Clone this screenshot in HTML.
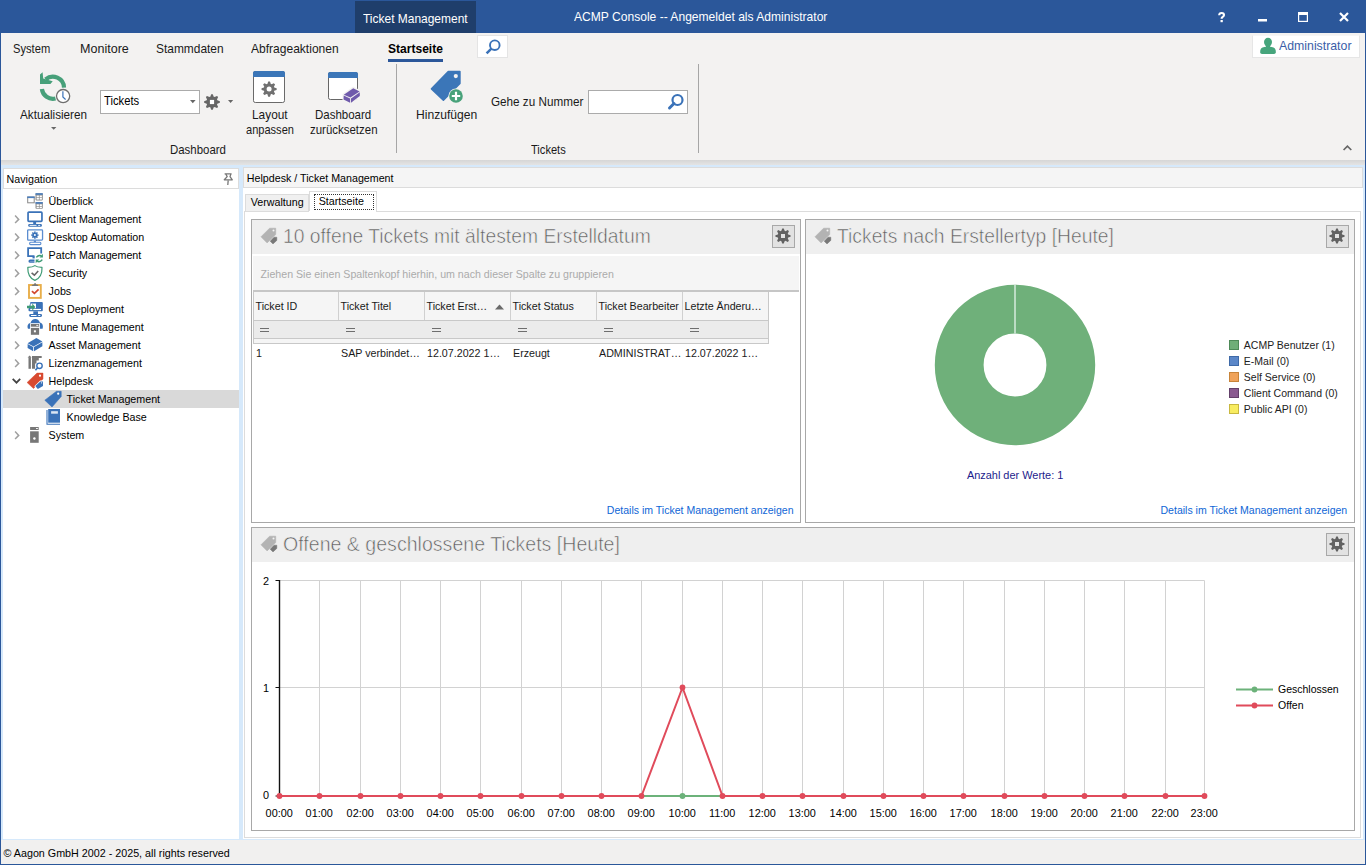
<!DOCTYPE html>
<html><head><meta charset="utf-8">
<style>
*{box-sizing:border-box;margin:0;padding:0}
html,body{width:1366px;height:865px;overflow:hidden;background:#f3f2f1;font-family:"Liberation Sans",sans-serif;color:#222;position:relative}
.a{position:absolute}
.t{position:absolute;white-space:nowrap}
svg{overflow:visible}
</style></head><body>
<div class="a" style="left:0px;top:0px;width:1366px;height:33px;background:#2b579a;"></div>
<div class="a" style="left:355px;top:1px;width:121px;height:32px;background:#1f3e6b;"></div>
<div class="t" style="left:363.40px;top:13.17px;font-size:12.209px;line-height:12.209px;color:#fff;transform:scaleX(0.9817);transform-origin:0 0;">Ticket Management</div>
<div class="t" style="left:574.30px;top:10.57px;font-size:12.209px;line-height:12.209px;color:#fff;transform:scaleX(0.9904);transform-origin:0 0;">ACMP Console -- Angemeldet als Administrator</div>
<svg class="a" style="left:1216px;top:11px" width="11" height="12"><path d="M3.2 4.3C3.2 2.8 4.2 2 5.6 2C7 2 8 2.8 8 4C8 5.1 7.2 5.6 6.5 6.1C5.8 6.6 5.6 7 5.6 7.8" fill="none" stroke="#fff" stroke-width="2.1"/><rect x="4.5" y="9" width="2.3" height="2.2" fill="#fff"/></svg>
<div class="a" style="left:1258px;top:19px;width:9px;height:2px;background:#fff;"></div>
<div class="a" style="left:1258px;top:21px;width:9px;height:0.5px;background:rgba(255,255,255,0.5);"></div>
<svg class="a" style="left:1298px;top:12px" width="10" height="10"><rect x="0.6" y="1.5" width="8.8" height="7.9" fill="none" stroke="#fff" stroke-width="1.2"/><rect x="0" y="0" width="10" height="3" fill="#fff"/></svg>
<svg class="a" style="left:1339px;top:12px" width="10" height="10"><path d="M1 1L9 9M9 1L1 9" stroke="#fff" stroke-width="2.2"/></svg>
<div class="a" style="left:0px;top:33px;width:1366px;height:127px;background:#f3f2f1;"></div>
<div class="t" style="left:13.20px;top:42.57px;font-size:12.209px;line-height:12.209px;color:#1a1a1a;transform:scaleX(0.9164);transform-origin:0 0;">System</div>
<div class="t" style="left:80.10px;top:42.57px;font-size:12.209px;line-height:12.209px;color:#1a1a1a;transform:scaleX(1.0296);transform-origin:0 0;">Monitore</div>
<div class="t" style="left:156.00px;top:42.57px;font-size:12.209px;line-height:12.209px;color:#1a1a1a;transform:scaleX(0.9782);transform-origin:0 0;">Stammdaten</div>
<div class="t" style="left:251.00px;top:42.57px;font-size:12.209px;line-height:12.209px;color:#1a1a1a;transform:scaleX(0.9875);transform-origin:0 0;">Abfrageaktionen</div>
<div class="t" style="left:388.00px;top:42.57px;font-size:12.209px;line-height:12.209px;color:#000;font-weight:bold;transform:scaleX(0.9885);transform-origin:0 0;">Startseite</div>
<div class="a" style="left:388px;top:59px;width:55px;height:3px;background:#2b579a;"></div>
<div class="a" style="left:477px;top:35px;width:31px;height:23px;background:#fff;border:1px solid #e4e4e4"></div>
<svg class="a" style="left:485px;top:39px" width="18" height="18"><circle cx="9.8" cy="6.2" r="4.8" fill="none" stroke="#3a72b8" stroke-width="1.9"/><path d="M6.4 9.6L1.6 14.4" stroke="#3a72b8" stroke-width="2.5"/></svg>
<div class="a" style="left:1252px;top:35px;width:108px;height:23px;background:#fff;border:1px solid #e6e6e6;border-top-color:#f6f6f6"></div>
<svg class="a" style="left:1259px;top:38px" width="18" height="17"><ellipse cx="9" cy="4.1" rx="4" ry="4.3" fill="#46a57c"/><path d="M7 7H11V9.5H7Z" fill="#46a57c"/><path d="M1.2 13.5C1.2 10.2 3.5 9.2 6.5 8.8L9 8.6L11.5 8.8C14.5 9.2 16.8 10.2 16.8 13.5V14.3Q16.8 15.9 15 15.9H3Q1.2 15.9 1.2 14.3Z" fill="#46a57c"/></svg>
<div class="t" style="left:1279.40px;top:39.97px;font-size:12.209px;line-height:12.209px;color:#3a5ea8;transform:scaleX(1.0096);transform-origin:0 0;">Administrator</div>
<svg class="a" style="left:36px;top:71px" width="38" height="36" viewBox="0 0 38 36"><path d="M9.6 8.4A11.1 11.1 0 0 1 28 16.6" fill="none" stroke="#47a07a" stroke-width="4.2"/>
<path d="M5.9 18A11.1 11.1 0 0 0 19.5 27.5" fill="none" stroke="#47a07a" stroke-width="4.2"/>
<path d="M4 13L4 3.6L6.6 1.2L7.2 7.6L16.7 10.3L14.4 13Z" fill="#47a07a"/>
<circle cx="27.1" cy="25.1" r="6.6" fill="#fff" stroke="#6e6e6e" stroke-width="1.3"/>
<path d="M26.9 20.2V26L29.6 28.5" fill="none" stroke="#3a72b8" stroke-width="1.2"/></svg>
<div class="t" style="left:20.30px;top:108.55px;font-size:12.346px;line-height:12.346px;color:#1a1a1a;transform:scaleX(0.9494);transform-origin:0 0;">Aktualisieren</div>
<svg class="a" style="left:51px;top:126.8px" width="6" height="3"><path d="M0 0H5.4L2.7 2.8Z" fill="#666"/></svg>
<div class="a" style="left:100px;top:90px;width:100px;height:24px;background:#fff;border:1px solid #ababab"></div>
<div class="t" style="left:103.80px;top:94.55px;font-size:12.346px;line-height:12.346px;color:#000;transform:scaleX(0.9110);transform-origin:0 0;">Tickets</div>
<svg class="a" style="left:189.5px;top:99.8px" width="6" height="4"><path d="M0 0H5.6L2.8 3.2Z" fill="#666"/></svg>
<svg class="a" style="left:203px;top:93px" width="18" height="18" viewBox="0 0 18 18"><path d="M6.86 3.83 L7.29 3.67 L8.20 1.14 L9.80 1.14 L10.71 3.67 L11.14 3.83 L11.56 4.02 L13.99 2.88 L15.12 4.01 L13.98 6.44 L14.17 6.86 L14.33 7.29 L16.86 8.20 L16.86 9.80 L14.33 10.71 L14.17 11.14 L13.98 11.56 L15.12 13.99 L13.99 15.12 L11.56 13.98 L11.14 14.17 L10.71 14.33 L9.80 16.86 L8.20 16.86 L7.29 14.33 L6.86 14.17 L6.44 13.98 L4.01 15.12 L2.88 13.99 L4.02 11.56 L3.83 11.14 L3.67 10.71 L1.14 9.80 L1.14 8.20 L3.67 7.29 L3.83 6.86 L4.02 6.44 L2.88 4.01 L4.01 2.88 L6.44 4.02Z" fill="#666"/><rect x="6.9" y="6.9" width="4.2" height="4.2" fill="#fff"/></svg>
<svg class="a" style="left:228px;top:99.9px" width="6" height="4"><path d="M0 0H5.2L2.6 3Z" fill="#666"/></svg>
<svg class="a" style="left:253px;top:71px" width="33" height="33" viewBox="0 0 33 33"><rect x="0.5" y="0.5" width="31" height="31" rx="1.8" fill="#fff" stroke="#6a6a6a"/><path d="M0 6V2Q0 0 2 0H30Q32 0 32 2V6Z" fill="#3b76b8"/><path d="M14.03 13.11 L14.39 12.98 L15.21 10.55 L16.99 10.55 L17.81 12.98 L18.17 13.11 L18.51 13.27 L20.80 12.13 L22.07 13.40 L20.93 15.69 L21.09 16.03 L21.22 16.39 L23.65 17.21 L23.65 18.99 L21.22 19.81 L21.09 20.17 L20.93 20.51 L22.07 22.80 L20.80 24.07 L18.51 22.93 L18.17 23.09 L17.81 23.22 L16.99 25.65 L15.21 25.65 L14.39 23.22 L14.03 23.09 L13.69 22.93 L11.40 24.07 L10.13 22.80 L11.27 20.51 L11.11 20.17 L10.98 19.81 L8.55 18.99 L8.55 17.21 L10.98 16.39 L11.11 16.03 L11.27 15.69 L10.13 13.40 L11.40 12.13 L13.69 13.27Z" fill="#707070"/><circle cx="16.1" cy="18.1" r="2.5" fill="#fff"/></svg>
<div class="t" style="left:251.55px;top:108.55px;font-size:12.346px;line-height:12.346px;color:#1a1a1a;transform:scaleX(0.9632);transform-origin:0 0;">Layout</div>
<div class="t" style="left:245.60px;top:123.55px;font-size:12.346px;line-height:12.346px;color:#1a1a1a;transform:scaleX(0.8966);transform-origin:0 0;">anpassen</div>
<svg class="a" style="left:327px;top:71px" width="36" height="34" viewBox="0 0 36 34"><rect x="1.5" y="1.5" width="29" height="27" rx="1.8" fill="#fff" stroke="#666" stroke-width="1"/><path d="M1 7V3Q1 1 3 1H29Q31 1 31 3V7Z" fill="#3b76b8"/>
<path d="M16.3 23.5L26.3 16.5L33.3 20.2L33.3 25.2L23.6 32.3L16.3 28.7Z" fill="#f3f2f1" stroke="#f3f2f1" stroke-width="1.6" stroke-linejoin="round"/>
<path d="M16.8 23.7L26.25 17.2L32.6 20.5L23.4 26.6Z" fill="#6f5aab"/><path d="M16.7 24.6L23.1 27.5V31.7L16.5 28.4Z" fill="#6f5aab"/><path d="M24 27.4L32.8 21.3V25.1L24 31.7Z" fill="#6f5aab"/></svg>
<div class="t" style="left:315.25px;top:108.55px;font-size:12.346px;line-height:12.346px;color:#1a1a1a;transform:scaleX(0.9322);transform-origin:0 0;">Dashboard</div>
<div class="t" style="left:310.00px;top:123.55px;font-size:12.346px;line-height:12.346px;color:#1a1a1a;transform:scaleX(0.9294);transform-origin:0 0;">zurücksetzen</div>
<div class="t" style="left:170.40px;top:143.55px;font-size:12.346px;line-height:12.346px;color:#1a1a1a;transform:scaleX(0.9273);transform-origin:0 0;">Dashboard</div>
<div class="a" style="left:396px;top:64px;width:1px;height:89px;background:#a6a6a6;"></div>
<svg class="a" style="left:430px;top:70px" width="34" height="34" viewBox="0 0 34 34"><path d="M18.3 1.5H29.9V13.4L13.4 30.2L1.5 18.8Z" fill="#3b76b8" stroke="#3b76b8" stroke-width="1.6" stroke-linejoin="round"/><circle cx="25.8" cy="6.1" r="2.1" fill="#f3f2f1"/><circle cx="26" cy="26" r="7.6" fill="#f3f2f1"/><circle cx="26" cy="26" r="6.8" fill="#48a27a"/><path d="M26 21.8V30.2M21.8 26H30.2" stroke="#fff" stroke-width="2.2"/></svg>
<div class="t" style="left:416.30px;top:108.55px;font-size:12.346px;line-height:12.346px;color:#1a1a1a;transform:scaleX(0.9815);transform-origin:0 0;">Hinzufügen</div>
<div class="t" style="left:490.70px;top:95.55px;font-size:12.346px;line-height:12.346px;color:#1a1a1a;transform:scaleX(0.9485);transform-origin:0 0;">Gehe zu Nummer</div>
<div class="a" style="left:588px;top:90px;width:100px;height:24px;background:#fff;border:1px solid #ababab"></div>
<svg class="a" style="left:667px;top:93px" width="18" height="18"><circle cx="10.5" cy="7" r="5" fill="none" stroke="#3a72b8" stroke-width="2.2"/><path d="M7 10.5L2.5 15" stroke="#3a72b8" stroke-width="3" stroke-linecap="round"/></svg>
<div class="t" style="left:530.90px;top:143.55px;font-size:12.346px;line-height:12.346px;color:#1a1a1a;transform:scaleX(0.9006);transform-origin:0 0;">Tickets</div>
<div class="a" style="left:698px;top:64px;width:1px;height:89px;background:#a6a6a6;"></div>
<svg class="a" style="left:1342px;top:143px" width="11" height="8"><path d="M1.6 7L5.4 3.2L9.3 7" fill="none" stroke="#666" stroke-width="1.7"/></svg>
<div class="a" style="left:1px;top:160px;width:1364px;height:5px;background:linear-gradient(#d6d6d6,#e4e4e4);"></div>
<div class="a" style="left:1px;top:165px;width:1364px;height:675px;background:#d6e9fb;"></div>
<div class="a" style="left:3px;top:168px;width:236px;height:671px;background:#fff;"></div>
<div class="a" style="left:3px;top:168px;width:236px;height:21px;background:#fff;border:1px solid #dcdcdc"></div>
<div class="t" style="left:6.60px;top:173.94px;font-size:10.700px;line-height:10.700px;color:#000;">Navigation</div>
<svg class="a" style="left:222px;top:172px" width="12" height="14"><path d="M2.6 1.8H9.6M3.6 1.8L5.2 4.6L2.3 7.8H10.3L8 4.6L9 1.8" stroke="#777" stroke-width="1.3" fill="none" stroke-linejoin="round"/><path d="M6.2 8.4L5.8 13" stroke="#777" stroke-width="1.3"/></svg>
<div class="a" style="left:3px;top:390px;width:236px;height:18px;background:#d9d9d9;"></div>
<svg class="a" style="left:27px;top:193px" width="17" height="17" viewBox="0 0 17 17"><rect x="0.7" y="4" width="6.5" height="5.8" fill="#fff" stroke="#888"/><rect x="0.2" y="3.5" width="7.5" height="1.6" fill="#4a7fc0"/><rect x="8.5" y="0.2" width="7.3" height="7.2" rx="0.8" fill="#8a8a8a"/><rect x="8.5" y="0.2" width="7.3" height="1.6" fill="#4a7fc0"/><rect x="9.6" y="2.5" width="2.3" height="1.9" fill="#fff"/><rect x="12.6" y="2.5" width="2.3" height="1.9" fill="#fff"/><rect x="9.6" y="5" width="2.3" height="1.6" fill="#fff"/><rect x="12.6" y="5" width="2.3" height="1.6" fill="#fff"/><rect x="8.5" y="9.1" width="7.3" height="6.7" rx="0.8" fill="#8a8a8a"/><rect x="8.5" y="9.1" width="7.3" height="1.6" fill="#4a7fc0"/><rect x="9.6" y="11.3" width="2.3" height="1.9" fill="#fff"/><rect x="12.6" y="11.3" width="2.3" height="1.9" fill="#fff"/><rect x="9.6" y="13.8" width="2.3" height="1.3" fill="#fff"/><rect x="12.6" y="13.8" width="2.3" height="1.3" fill="#fff"/></svg>
<div class="t" style="left:48.60px;top:195.54px;font-size:10.700px;line-height:10.700px;color:#000;">Überblick</div>
<svg class="a" style="left:13px;top:214px" width="8" height="11"><path d="M2.1 1.6L5.7 5.4L2.1 9" fill="none" stroke="#a0a0a0" stroke-width="1.5"/></svg>
<svg class="a" style="left:27px;top:211px" width="17" height="17" viewBox="0 0 17 17"><rect x="1.05" y="1.1" width="13.9" height="9.2" rx="0.8" fill="none" stroke="#3a72b8" stroke-width="1.7"/><rect x="6.2" y="11" width="2.9" height="2" fill="#3a72b8"/><rect x="1.2" y="13" width="13.7" height="2.7" rx="1.2" fill="#3a72b8"/><rect x="2.6" y="13.9" width="6.9" height="0.9" fill="#fff"/><rect x="11.2" y="13.9" width="2" height="0.9" fill="#fff"/></svg>
<div class="t" style="left:48.60px;top:213.54px;font-size:10.700px;line-height:10.700px;color:#000;">Client Management</div>
<svg class="a" style="left:13px;top:232px" width="8" height="11"><path d="M2.1 1.6L5.7 5.4L2.1 9" fill="none" stroke="#a0a0a0" stroke-width="1.5"/></svg>
<svg class="a" style="left:27px;top:229px" width="17" height="17" viewBox="0 0 17 17"><rect x="0.65" y="0.85" width="14.9" height="10.3" rx="0.8" fill="none" stroke="#5b8dd0" stroke-width="1.3"/><g transform="translate(7.9 6.1)" fill="#3a72b8"><circle r="2.4"/><rect x="-0.8" y="-3.6" width="1.6" height="7.2"/><rect x="-0.8" y="-3.6" width="1.6" height="7.2" transform="rotate(45)"/><rect x="-0.8" y="-3.6" width="1.6" height="7.2" transform="rotate(90)"/><rect x="-0.8" y="-3.6" width="1.6" height="7.2" transform="rotate(135)"/></g><circle cx="7.9" cy="6.1" r="1" fill="#fff"/><rect x="6.8" y="11.5" width="2.2" height="1.6" fill="#5b8dd0"/><rect x="2.6" y="13.3" width="11.3" height="2.3" rx="1" fill="none" stroke="#5b8dd0" stroke-width="1.1"/></svg>
<div class="t" style="left:48.60px;top:231.54px;font-size:10.700px;line-height:10.700px;color:#000;">Desktop Automation</div>
<svg class="a" style="left:13px;top:250px" width="8" height="11"><path d="M2.1 1.6L5.7 5.4L2.1 9" fill="none" stroke="#a0a0a0" stroke-width="1.5"/></svg>
<svg class="a" style="left:27px;top:247px" width="17" height="17" viewBox="0 0 17 17"><path d="M7.5 9.2H1.1V1.2H14.2V6.5" fill="none" stroke="#3a72b8" stroke-width="1.8"/><rect x="5.5" y="9.4" width="2.2" height="2" fill="#3a72b8"/><path d="M7.5 13.3H3.2Q2.2 13.3 2.2 14.2Q2.2 15.1 3.2 15.1H7.5" fill="none" stroke="#3a72b8" stroke-width="1.5"/><path d="M9.3 10.4Q11.5 7.5 14.5 8.8" fill="none" stroke="#3d9a74" stroke-width="1.5"/><path d="M15.9 6.8V10.4H12.5Z" fill="#3d9a74"/><path d="M15.3 12.6Q13.2 15.6 10.2 14.3" fill="none" stroke="#3d9a74" stroke-width="1.5"/><path d="M8.7 16.2V12.5H12.2Z" fill="#3d9a74"/></svg>
<div class="t" style="left:48.60px;top:249.54px;font-size:10.700px;line-height:10.700px;color:#000;">Patch Management</div>
<svg class="a" style="left:13px;top:268px" width="8" height="11"><path d="M2.1 1.6L5.7 5.4L2.1 9" fill="none" stroke="#a0a0a0" stroke-width="1.5"/></svg>
<svg class="a" style="left:27px;top:265px" width="17" height="17" viewBox="0 0 17 17"><path d="M7.9 0.6C9.3 1.7 11.5 2.3 15 2.4C15.3 9 12.5 13.5 7.9 15.4C3.3 13.5 0.6 9 0.8 2.4C4.3 2.3 6.5 1.7 7.9 0.6Z" fill="none" stroke="#3d9a74" stroke-width="1.2" stroke-linejoin="round"/><path d="M4.6 7.8L7.4 10.2L11.2 6" fill="none" stroke="#666" stroke-width="1.6"/></svg>
<div class="t" style="left:48.60px;top:267.54px;font-size:10.700px;line-height:10.700px;color:#000;">Security</div>
<svg class="a" style="left:13px;top:286px" width="8" height="11"><path d="M2.1 1.6L5.7 5.4L2.1 9" fill="none" stroke="#a0a0a0" stroke-width="1.5"/></svg>
<svg class="a" style="left:27px;top:283px" width="17" height="17" viewBox="0 0 17 17"><rect x="2" y="2" width="11.8" height="12.9" fill="#fff" stroke="#e8ae4a" stroke-width="1.9"/><path d="M4.6 2.9H11.6L10.5 1.4H9.3L8.8 0.3H7.4L6.9 1.4H5.7Z" fill="#777"/><path d="M4.9 8.1L7.45 10.4L11.6 6.4" fill="none" stroke="#d2482f" stroke-width="1.7"/></svg>
<div class="t" style="left:48.60px;top:285.54px;font-size:10.700px;line-height:10.700px;color:#000;">Jobs</div>
<svg class="a" style="left:13px;top:304px" width="8" height="11"><path d="M2.1 1.6L5.7 5.4L2.1 9" fill="none" stroke="#a0a0a0" stroke-width="1.5"/></svg>
<svg class="a" style="left:27px;top:301px" width="17" height="17" viewBox="0 0 17 17"><path d="M3.5 1H14.8Q15.8 1 15.8 2V9.3Q15.8 10.3 14.8 10.3H2.5Q1.5 10.3 1.5 9.3V8" fill="#3a72b8"/><rect x="3.2" y="7.9" width="10.8" height="1.2" fill="#fff"/><rect x="3.6" y="2.6" width="5.4" height="4.6" fill="#fff"/><rect x="6.3" y="10.3" width="4.7" height="2.8" fill="#3a72b8"/><rect x="2.2" y="13" width="12.8" height="2.9" rx="1.3" fill="#3a72b8"/><rect x="4" y="14" width="5.5" height="1" fill="#fff"/><rect x="11.3" y="14" width="2" height="1" fill="#fff"/><path d="M0 5.6H5.3V3.2L8.3 6.9L5.3 10.5V8.1H0Z" fill="#3d9a74" transform="translate(0 -0.8)"/></svg>
<div class="t" style="left:48.60px;top:303.54px;font-size:10.700px;line-height:10.700px;color:#000;">OS Deployment</div>
<svg class="a" style="left:13px;top:322px" width="8" height="11"><path d="M2.1 1.6L5.7 5.4L2.1 9" fill="none" stroke="#a0a0a0" stroke-width="1.5"/></svg>
<svg class="a" style="left:27px;top:319px" width="17" height="17" viewBox="0 0 17 17"><path d="M1 9.8C-0.2 7.2 1 4.2 3.5 4C4.2 1.5 6 0 8.3 0C10.6 0 12.4 1.5 12.8 3.6C15.3 3.8 16.6 6.8 15.6 9.8Z" fill="#3a72b8"/><rect x="3.1" y="4.2" width="9.8" height="12.4" fill="#fff"/><rect x="3.9" y="5" width="8.2" height="2.7" fill="#777"/><rect x="9.3" y="5.9" width="2" height="0.9" fill="#fff"/><rect x="3.9" y="8.9" width="8.2" height="6.9" fill="#777"/><rect x="6.9" y="11.3" width="2" height="2" fill="#fff"/></svg>
<div class="t" style="left:48.60px;top:321.54px;font-size:10.700px;line-height:10.700px;color:#000;">Intune Management</div>
<svg class="a" style="left:13px;top:340px" width="8" height="11"><path d="M2.1 1.6L5.7 5.4L2.1 9" fill="none" stroke="#a0a0a0" stroke-width="1.5"/></svg>
<svg class="a" style="left:27px;top:337px" width="17" height="17" viewBox="0 0 17 17"><path d="M0.6 6.2L9.4 1.1L15.4 4.4L6.6 9.5Z" fill="#3a72b8"/><path d="M0.6 6.9L6.2 10.1V14.2L0.6 11Z" fill="#3a72b8"/><path d="M7 10.1L15.4 5.2V9.2L7 14.2Z" fill="#3a72b8"/></svg>
<div class="t" style="left:48.60px;top:339.54px;font-size:10.700px;line-height:10.700px;color:#000;">Asset Management</div>
<svg class="a" style="left:13px;top:358px" width="8" height="11"><path d="M2.1 1.6L5.7 5.4L2.1 9" fill="none" stroke="#a0a0a0" stroke-width="1.5"/></svg>
<svg class="a" style="left:27px;top:355px" width="17" height="17" viewBox="0 0 17 17"><rect x="1.5" y="2.2" width="2.4" height="11.6" fill="#777"/><path d="M0.6 2.5L2.7 0.4L4.5 2.5Z" fill="#777"/><path d="M5 1H14.7V2.9H11.8V5.6H9.5V8.5H8.1V13.8H5Z" fill="#777"/><circle cx="12.5" cy="10.8" r="2.7" fill="#fff" stroke="#3a72b8" stroke-width="1.4"/><path d="M10.6 12.8L8.4 15.3" stroke="#3a72b8" stroke-width="1.6"/></svg>
<div class="t" style="left:48.60px;top:357.54px;font-size:10.700px;line-height:10.700px;color:#000;">Lizenzmanagement</div>
<svg class="a" style="left:11px;top:378px" width="11" height="8"><path d="M1.7 0.8L5.5 4.6L9.2 0.8" fill="none" stroke="#444" stroke-width="1.8"/></svg>
<svg class="a" style="left:27px;top:373px" width="17" height="17" viewBox="0 0 17 17"><path d="M10 0.1H16V6.1L6.5 15.5L0.1 9.5Z" fill="#d84a30" stroke="#d84a30" stroke-width="0.5" stroke-linejoin="round"/><circle cx="13" cy="2.7" r="1.1" fill="#fff"/><path d="M13.2 7.6H16.7V13.2L10.8 17L7.3 13.2Z" fill="#fff"/><path d="M13.4 8.5H16V13L10.8 16L8.3 13Z" fill="#3a72b8"/><circle cx="14.6" cy="9.8" r="0.6" fill="#fff"/></svg>
<div class="t" style="left:48.60px;top:375.54px;font-size:10.700px;line-height:10.700px;color:#000;">Helpdesk</div>
<svg class="a" style="left:45px;top:391px" width="17" height="17" viewBox="0 0 17 17"><path d="M11.5 0.3H16.2V5.5L7 16L-0.2 9.2Z" fill="#3a72b8" stroke="#3a72b8" stroke-width="0.6" stroke-linejoin="round"/><circle cx="13.2" cy="2.7" r="1.1" fill="#fff"/></svg>
<div class="t" style="left:66.60px;top:393.54px;font-size:10.700px;line-height:10.700px;color:#000;">Ticket Management</div>
<svg class="a" style="left:45px;top:409px" width="17" height="17" viewBox="0 0 17 17"><rect x="3.2" y="0" width="11.8" height="13.7" fill="#3a72b8"/><rect x="6.1" y="2.2" width="6.8" height="2.5" fill="#dbe6f3"/><path d="M2 0.9V15.3H15" fill="none" stroke="#3a72b8" stroke-width="1.1"/></svg>
<div class="t" style="left:66.60px;top:411.54px;font-size:10.700px;line-height:10.700px;color:#000;">Knowledge Base</div>
<svg class="a" style="left:13px;top:430px" width="8" height="11"><path d="M2.1 1.6L5.7 5.4L2.1 9" fill="none" stroke="#a0a0a0" stroke-width="1.5"/></svg>
<svg class="a" style="left:27px;top:427px" width="17" height="17" viewBox="0 0 17 17"><rect x="3.1" y="0" width="8.6" height="3" fill="#777"/><rect x="9.1" y="1" width="1.7" height="1" fill="#fff"/><rect x="3.1" y="4.3" width="8.6" height="11.5" fill="#777"/><circle cx="7.4" cy="11.5" r="1.2" fill="#fff"/></svg>
<div class="t" style="left:48.60px;top:429.54px;font-size:10.700px;line-height:10.700px;color:#000;">System</div>
<div class="a" style="left:243px;top:167px;width:1120px;height:672px;background:#fff;"></div>
<div class="a" style="left:243px;top:167px;width:1120px;height:21px;background:#f5f5f5;border:1px solid #dcdcdc"></div>
<div class="t" style="left:246.80px;top:172.74px;font-size:10.700px;line-height:10.700px;color:#000;">Helpdesk / Ticket Management</div>
<div class="a" style="left:245px;top:194px;width:64px;height:18px;background:#f0f0f0;border:1px solid #dcdcdc;border-bottom:none"></div>
<div class="t" style="left:250.80px;top:197.34px;font-size:10.700px;line-height:10.700px;color:#000;">Verwaltung</div>
<div class="a" style="left:309px;top:191px;width:68px;height:21px;background:#fff;border:1px solid #dcdcdc;border-bottom:none"></div>
<div class="a" style="left:314px;top:194px;width:60px;height:16px;border:1px dotted #333"></div>
<div class="t" style="left:318.70px;top:195.54px;font-size:10.700px;line-height:10.700px;color:#000;">Startseite</div>
<div class="a" style="left:244px;top:211px;width:1117px;height:627px;background:#fff;border:1px solid #dcdcdc"></div>
<div class="a" style="left:309px;top:211px;width:67px;height:1px;background:#fff"></div>
<div class="a" style="left:251px;top:219px;width:550px;height:304px;background:#fff;border:1px solid #a8a8a8"></div>
<div class="a" style="left:252px;top:220px;width:548px;height:34px;background:#efefef;"></div>
<svg class="a" style="left:261px;top:227px" width="17" height="17" viewBox="0 0 17 17"><path d="M8.6 1.2H14.7V7.6L6.1 15.9L0 9.8Z" fill="#b3b3b3" stroke="#b3b3b3" stroke-width="0.6" stroke-linejoin="round"/><circle cx="12.5" cy="3.5" r="1" fill="#f4f4f4"/><path d="M13 10.2H15.8V13.4L12 16.9L9.2 14.2Z" fill="#787878" stroke="#787878" stroke-width="0.5" stroke-linejoin="round"/></svg>
<div class="t" style="left:282.60px;top:226.47px;font-size:20.713px;line-height:20.713px;color:#5c5c5c;transform:scaleX(0.9326);transform-origin:0 0;-webkit-text-stroke:0.6px #efefef;">10 offene Tickets mit ältestem Erstelldatum</div>
<div class="a" style="left:772px;top:225px;width:23px;height:23px;background:#e2e2e2;border:1px solid #a8a8a8"></div>
<svg class="a" style="left:775px;top:228px" width="16" height="16" viewBox="0 0 16 16"><path d="M5.93 3.01 L6.38 2.85 L7.20 0.44 L8.80 0.44 L9.62 2.85 L10.07 3.01 L10.50 3.21 L12.78 2.09 L13.91 3.22 L12.79 5.50 L12.99 5.93 L13.15 6.38 L15.56 7.20 L15.56 8.80 L13.15 9.62 L12.99 10.07 L12.79 10.50 L13.91 12.78 L12.78 13.91 L10.50 12.79 L10.07 12.99 L9.62 13.15 L8.80 15.56 L7.20 15.56 L6.38 13.15 L5.93 12.99 L5.50 12.79 L3.22 13.91 L2.09 12.78 L3.21 10.50 L3.01 10.07 L2.85 9.62 L0.44 8.80 L0.44 7.20 L2.85 6.38 L3.01 5.93 L3.21 5.50 L2.09 3.22 L3.22 2.09 L5.50 3.21Z" fill="#626262"/><rect x="6" y="6" width="4" height="4" fill="#e2e2e2"/></svg>
<div class="a" style="left:253px;top:256px;width:546px;height:34px;background:#f5f5f5;"></div>
<div class="t" style="left:260.60px;top:268.90px;font-size:10.631px;line-height:10.631px;color:#ababab;">Ziehen Sie einen Spaltenkopf hierhin, um nach dieser Spalte zu gruppieren</div>
<div class="a" style="left:253px;top:290px;width:546px;height:2px;background:#c6c6c6;"></div>
<div class="a" style="left:253px;top:292px;width:516px;height:52px;background:#f5f5f5;border-left:1px solid #c8c8c8;border-right:1px solid #c8c8c8"></div>
<div class="a" style="left:253px;top:320px;width:516px;height:1px;background:#c8c8c8;"></div>
<div class="a" style="left:254px;top:321px;width:514px;height:17px;background:#ebebeb;"></div>
<div class="a" style="left:253px;top:338px;width:516px;height:1px;background:#c8c8c8;"></div>
<div class="a" style="left:253px;top:343px;width:516px;height:1px;background:#c8c8c8;"></div>
<div class="t" style="left:255.50px;top:300.74px;font-size:10.700px;line-height:10.700px;color:#1a1a1a;">Ticket ID</div>
<div class="a" style="left:260px;top:328px;width:9px;height:1px;background:#6e6e6e;"></div>
<div class="a" style="left:260px;top:331px;width:9px;height:1px;background:#6e6e6e;"></div>
<div class="t" style="left:256.00px;top:347.54px;font-size:10.700px;line-height:10.700px;color:#1a1a1a;">1</div>
<div class="a" style="left:338px;top:292px;width:1px;height:28px;background:#d0d0d0;"></div>
<div class="t" style="left:340.50px;top:300.74px;font-size:10.700px;line-height:10.700px;color:#1a1a1a;">Ticket Titel</div>
<div class="a" style="left:346px;top:328px;width:9px;height:1px;background:#6e6e6e;"></div>
<div class="a" style="left:346px;top:331px;width:9px;height:1px;background:#6e6e6e;"></div>
<div class="t" style="left:341.00px;top:347.54px;font-size:10.700px;line-height:10.700px;color:#1a1a1a;">SAP verbindet…</div>
<div class="a" style="left:424px;top:292px;width:1px;height:28px;background:#d0d0d0;"></div>
<div class="t" style="left:426.50px;top:300.74px;font-size:10.700px;line-height:10.700px;color:#1a1a1a;">Ticket Erst…</div>
<div class="a" style="left:432px;top:328px;width:9px;height:1px;background:#6e6e6e;"></div>
<div class="a" style="left:432px;top:331px;width:9px;height:1px;background:#6e6e6e;"></div>
<div class="t" style="left:427.00px;top:347.54px;font-size:10.700px;line-height:10.700px;color:#1a1a1a;">12.07.2022 1…</div>
<div class="a" style="left:510px;top:292px;width:1px;height:28px;background:#d0d0d0;"></div>
<div class="t" style="left:512.50px;top:300.74px;font-size:10.700px;line-height:10.700px;color:#1a1a1a;">Ticket Status</div>
<div class="a" style="left:518px;top:328px;width:9px;height:1px;background:#6e6e6e;"></div>
<div class="a" style="left:518px;top:331px;width:9px;height:1px;background:#6e6e6e;"></div>
<div class="t" style="left:513.00px;top:347.54px;font-size:10.700px;line-height:10.700px;color:#1a1a1a;">Erzeugt</div>
<div class="a" style="left:596px;top:292px;width:1px;height:28px;background:#d0d0d0;"></div>
<div class="t" style="left:598.50px;top:300.74px;font-size:10.700px;line-height:10.700px;color:#1a1a1a;">Ticket Bearbeiter</div>
<div class="a" style="left:604px;top:328px;width:9px;height:1px;background:#6e6e6e;"></div>
<div class="a" style="left:604px;top:331px;width:9px;height:1px;background:#6e6e6e;"></div>
<div class="t" style="left:599.00px;top:347.54px;font-size:10.700px;line-height:10.700px;color:#1a1a1a;">ADMINISTRAT…</div>
<div class="a" style="left:682px;top:292px;width:1px;height:28px;background:#d0d0d0;"></div>
<div class="t" style="left:684.50px;top:300.74px;font-size:10.700px;line-height:10.700px;color:#1a1a1a;">Letzte Änderu…</div>
<div class="a" style="left:690px;top:328px;width:9px;height:1px;background:#6e6e6e;"></div>
<div class="a" style="left:690px;top:331px;width:9px;height:1px;background:#6e6e6e;"></div>
<div class="t" style="left:685.00px;top:347.54px;font-size:10.700px;line-height:10.700px;color:#1a1a1a;">12.07.2022 1…</div>
<svg class="a" style="left:495px;top:304px" width="9" height="6"><path d="M0 5.5H9L4.5 0.5Z" fill="#6a6a6a"/></svg>
<div class="t" style="left:606.80px;top:504.58px;font-size:10.542px;line-height:10.542px;color:#0f66d6;">Details im Ticket Management anzeigen</div>
<div class="a" style="left:805px;top:219px;width:550px;height:304px;background:#fff;border:1px solid #a8a8a8"></div>
<div class="a" style="left:806px;top:220px;width:548px;height:34px;background:#efefef;"></div>
<svg class="a" style="left:815px;top:227px" width="17" height="17" viewBox="0 0 17 17"><path d="M8.6 1.2H14.7V7.6L6.1 15.9L0 9.8Z" fill="#b3b3b3" stroke="#b3b3b3" stroke-width="0.6" stroke-linejoin="round"/><circle cx="12.5" cy="3.5" r="1" fill="#f4f4f4"/><path d="M13 10.2H15.8V13.4L12 16.9L9.2 14.2Z" fill="#787878" stroke="#787878" stroke-width="0.5" stroke-linejoin="round"/></svg>
<div class="t" style="left:836.60px;top:226.47px;font-size:20.713px;line-height:20.713px;color:#5c5c5c;transform:scaleX(0.9315);transform-origin:0 0;-webkit-text-stroke:0.6px #efefef;">Tickets nach Erstellertyp [Heute]</div>
<div class="a" style="left:1326px;top:225px;width:23px;height:23px;background:#e2e2e2;border:1px solid #a8a8a8"></div>
<svg class="a" style="left:1329px;top:228px" width="16" height="16" viewBox="0 0 16 16"><path d="M5.93 3.01 L6.38 2.85 L7.20 0.44 L8.80 0.44 L9.62 2.85 L10.07 3.01 L10.50 3.21 L12.78 2.09 L13.91 3.22 L12.79 5.50 L12.99 5.93 L13.15 6.38 L15.56 7.20 L15.56 8.80 L13.15 9.62 L12.99 10.07 L12.79 10.50 L13.91 12.78 L12.78 13.91 L10.50 12.79 L10.07 12.99 L9.62 13.15 L8.80 15.56 L7.20 15.56 L6.38 13.15 L5.93 12.99 L5.50 12.79 L3.22 13.91 L2.09 12.78 L3.21 10.50 L3.01 10.07 L2.85 9.62 L0.44 8.80 L0.44 7.20 L2.85 6.38 L3.01 5.93 L3.21 5.50 L2.09 3.22 L3.22 2.09 L5.50 3.21Z" fill="#626262"/><rect x="6" y="6" width="4" height="4" fill="#e2e2e2"/></svg>
<svg class="a" style="left:930px;top:280px" width="170" height="170"><circle cx="85" cy="85" r="55.8" fill="none" stroke="#6fb07a" stroke-width="48.8"/><rect x="84" y="5" width="2" height="49" fill="#bcdcc4"/></svg>
<div class="a" style="left:1229px;top:340px;width:10px;height:10px;background:#6fae78;border:1px solid #4e8a58"></div>
<div class="t" style="left:1243.80px;top:339.91px;font-size:10.500px;line-height:10.500px;color:#222;">ACMP Benutzer (1)</div>
<div class="a" style="left:1229px;top:356px;width:10px;height:10px;background:#5b87c8;border:1px solid #3f6aa8"></div>
<div class="t" style="left:1243.80px;top:355.91px;font-size:10.500px;line-height:10.500px;color:#222;">E-Mail (0)</div>
<div class="a" style="left:1229px;top:372px;width:10px;height:10px;background:#f0a35a;border:1px solid #c8843a"></div>
<div class="t" style="left:1243.80px;top:371.91px;font-size:10.500px;line-height:10.500px;color:#222;">Self Service (0)</div>
<div class="a" style="left:1229px;top:388px;width:10px;height:10px;background:#8a5a90;border:1px solid #64406a"></div>
<div class="t" style="left:1243.80px;top:387.91px;font-size:10.500px;line-height:10.500px;color:#222;">Client Command (0)</div>
<div class="a" style="left:1229px;top:404px;width:10px;height:10px;background:#f8ec60;border:1px solid #c8b840"></div>
<div class="t" style="left:1243.80px;top:403.91px;font-size:10.500px;line-height:10.500px;color:#222;">Public API (0)</div>
<div class="t" style="left:966.90px;top:469.53px;font-size:10.954px;line-height:10.954px;color:#1c1c8c;">Anzahl der Werte: 1</div>
<div class="t" style="left:1160.50px;top:504.58px;font-size:10.542px;line-height:10.542px;color:#0f66d6;">Details im Ticket Management anzeigen</div>
<div class="a" style="left:251px;top:527px;width:1104px;height:304px;background:#fff;border:1px solid #a8a8a8"></div>
<div class="a" style="left:252px;top:528px;width:1102px;height:34px;background:#efefef;"></div>
<svg class="a" style="left:261px;top:535px" width="17" height="17" viewBox="0 0 17 17"><path d="M8.6 1.2H14.7V7.6L6.1 15.9L0 9.8Z" fill="#b3b3b3" stroke="#b3b3b3" stroke-width="0.6" stroke-linejoin="round"/><circle cx="12.5" cy="3.5" r="1" fill="#f4f4f4"/><path d="M13 10.2H15.8V13.4L12 16.9L9.2 14.2Z" fill="#787878" stroke="#787878" stroke-width="0.5" stroke-linejoin="round"/></svg>
<div class="t" style="left:282.60px;top:534.47px;font-size:20.713px;line-height:20.713px;color:#5c5c5c;transform:scaleX(0.9455);transform-origin:0 0;-webkit-text-stroke:0.6px #efefef;">Offene & geschlossene Tickets [Heute]</div>
<div class="a" style="left:1326px;top:533px;width:23px;height:23px;background:#e2e2e2;border:1px solid #a8a8a8"></div>
<svg class="a" style="left:1329px;top:536px" width="16" height="16" viewBox="0 0 16 16"><path d="M5.93 3.01 L6.38 2.85 L7.20 0.44 L8.80 0.44 L9.62 2.85 L10.07 3.01 L10.50 3.21 L12.78 2.09 L13.91 3.22 L12.79 5.50 L12.99 5.93 L13.15 6.38 L15.56 7.20 L15.56 8.80 L13.15 9.62 L12.99 10.07 L12.79 10.50 L13.91 12.78 L12.78 13.91 L10.50 12.79 L10.07 12.99 L9.62 13.15 L8.80 15.56 L7.20 15.56 L6.38 13.15 L5.93 12.99 L5.50 12.79 L3.22 13.91 L2.09 12.78 L3.21 10.50 L3.01 10.07 L2.85 9.62 L0.44 8.80 L0.44 7.20 L2.85 6.38 L3.01 5.93 L3.21 5.50 L2.09 3.22 L3.22 2.09 L5.50 3.21Z" fill="#626262"/><rect x="6" y="6" width="4" height="4" fill="#e2e2e2"/></svg>
<svg class="a" style="left:252px;top:562px" width="1102" height="268"><line x1="67.5" y1="18.5" x2="67.5" y2="234" stroke="#d2d2d2" stroke-width="1"/><line x1="108.5" y1="18.5" x2="108.5" y2="234" stroke="#d2d2d2" stroke-width="1"/><line x1="148.5" y1="18.5" x2="148.5" y2="234" stroke="#d2d2d2" stroke-width="1"/><line x1="188.5" y1="18.5" x2="188.5" y2="234" stroke="#d2d2d2" stroke-width="1"/><line x1="228.5" y1="18.5" x2="228.5" y2="234" stroke="#d2d2d2" stroke-width="1"/><line x1="269.5" y1="18.5" x2="269.5" y2="234" stroke="#d2d2d2" stroke-width="1"/><line x1="309.5" y1="18.5" x2="309.5" y2="234" stroke="#d2d2d2" stroke-width="1"/><line x1="349.5" y1="18.5" x2="349.5" y2="234" stroke="#d2d2d2" stroke-width="1"/><line x1="389.5" y1="18.5" x2="389.5" y2="234" stroke="#d2d2d2" stroke-width="1"/><line x1="430.5" y1="18.5" x2="430.5" y2="234" stroke="#d2d2d2" stroke-width="1"/><line x1="470.5" y1="18.5" x2="470.5" y2="234" stroke="#d2d2d2" stroke-width="1"/><line x1="510.5" y1="18.5" x2="510.5" y2="234" stroke="#d2d2d2" stroke-width="1"/><line x1="550.5" y1="18.5" x2="550.5" y2="234" stroke="#d2d2d2" stroke-width="1"/><line x1="591.5" y1="18.5" x2="591.5" y2="234" stroke="#d2d2d2" stroke-width="1"/><line x1="631.5" y1="18.5" x2="631.5" y2="234" stroke="#d2d2d2" stroke-width="1"/><line x1="671.5" y1="18.5" x2="671.5" y2="234" stroke="#d2d2d2" stroke-width="1"/><line x1="711.5" y1="18.5" x2="711.5" y2="234" stroke="#d2d2d2" stroke-width="1"/><line x1="752.5" y1="18.5" x2="752.5" y2="234" stroke="#d2d2d2" stroke-width="1"/><line x1="792.5" y1="18.5" x2="792.5" y2="234" stroke="#d2d2d2" stroke-width="1"/><line x1="832.5" y1="18.5" x2="832.5" y2="234" stroke="#d2d2d2" stroke-width="1"/><line x1="872.5" y1="18.5" x2="872.5" y2="234" stroke="#d2d2d2" stroke-width="1"/><line x1="913.5" y1="18.5" x2="913.5" y2="234" stroke="#d2d2d2" stroke-width="1"/><line x1="952.5" y1="18.5" x2="952.5" y2="234" stroke="#d2d2d2" stroke-width="1"/><line x1="27.5" y1="125.5" x2="952.5" y2="125.5" stroke="#d2d2d2" stroke-width="1"/><line x1="27.5" y1="18.5" x2="952.5" y2="18.5" stroke="#d2d2d2" stroke-width="1"/><line x1="27.5" y1="18.0" x2="27.5" y2="234" stroke="#111" stroke-width="1.4"/><line x1="23.5" y1="125.5" x2="27.5" y2="125.5" stroke="#111" stroke-width="1"/><line x1="23.5" y1="18.5" x2="27.5" y2="18.5" stroke="#111" stroke-width="1"/><line x1="23.5" y1="234" x2="27.5" y2="234" stroke="#111" stroke-width="1"/><polyline points="389.5,234 470.5,234" fill="none" stroke="#6cb27a" stroke-width="2"/><polyline points="27.5,234 389.5,234" fill="none" stroke="#e04b5b" stroke-width="2"/><polyline points="389.5,234 430.5,125.5 470.5,234 952.5,234" fill="none" stroke="#e04b5b" stroke-width="2" stroke-linejoin="round"/><circle cx="430.5" cy="234" r="2.9" fill="#6cb27a"/><circle cx="27.5" cy="234" r="2.9" fill="#e04b5b"/><circle cx="67.5" cy="234" r="2.9" fill="#e04b5b"/><circle cx="108.5" cy="234" r="2.9" fill="#e04b5b"/><circle cx="148.5" cy="234" r="2.9" fill="#e04b5b"/><circle cx="188.5" cy="234" r="2.9" fill="#e04b5b"/><circle cx="228.5" cy="234" r="2.9" fill="#e04b5b"/><circle cx="269.5" cy="234" r="2.9" fill="#e04b5b"/><circle cx="309.5" cy="234" r="2.9" fill="#e04b5b"/><circle cx="349.5" cy="234" r="2.9" fill="#e04b5b"/><circle cx="389.5" cy="234" r="2.9" fill="#e04b5b"/><circle cx="430.5" cy="125.5" r="2.9" fill="#e04b5b"/><circle cx="470.5" cy="234" r="2.9" fill="#e04b5b"/><circle cx="510.5" cy="234" r="2.9" fill="#e04b5b"/><circle cx="550.5" cy="234" r="2.9" fill="#e04b5b"/><circle cx="591.5" cy="234" r="2.9" fill="#e04b5b"/><circle cx="631.5" cy="234" r="2.9" fill="#e04b5b"/><circle cx="671.5" cy="234" r="2.9" fill="#e04b5b"/><circle cx="711.5" cy="234" r="2.9" fill="#e04b5b"/><circle cx="752.5" cy="234" r="2.9" fill="#e04b5b"/><circle cx="792.5" cy="234" r="2.9" fill="#e04b5b"/><circle cx="832.5" cy="234" r="2.9" fill="#e04b5b"/><circle cx="872.5" cy="234" r="2.9" fill="#e04b5b"/><circle cx="913.5" cy="234" r="2.9" fill="#e04b5b"/><circle cx="952.5" cy="234" r="2.9" fill="#e04b5b"/><line x1="984" y1="127.5" x2="1021" y2="127.5" stroke="#6cb27a" stroke-width="2"/><circle cx="1002.5" cy="127.5" r="2.9" fill="#6cb27a"/><line x1="984" y1="143.5" x2="1021" y2="143.5" stroke="#e04b5b" stroke-width="2"/><circle cx="1002.5" cy="143.5" r="2.9" fill="#e04b5b"/></svg>
<div class="t" style="left:263.10px;top:575.70px;font-size:10.870px;line-height:10.870px;color:#000;">2</div>
<div class="t" style="left:263.10px;top:682.80px;font-size:10.870px;line-height:10.870px;color:#000;">1</div>
<div class="t" style="left:263.10px;top:790.30px;font-size:10.870px;line-height:10.870px;color:#000;">0</div>
<div class="t" style="left:265.60px;top:807.50px;font-size:10.870px;line-height:10.870px;color:#000;">00:00</div>
<div class="t" style="left:305.60px;top:807.50px;font-size:10.870px;line-height:10.870px;color:#000;">01:00</div>
<div class="t" style="left:346.60px;top:807.50px;font-size:10.870px;line-height:10.870px;color:#000;">02:00</div>
<div class="t" style="left:386.60px;top:807.50px;font-size:10.870px;line-height:10.870px;color:#000;">03:00</div>
<div class="t" style="left:426.60px;top:807.50px;font-size:10.870px;line-height:10.870px;color:#000;">04:00</div>
<div class="t" style="left:466.60px;top:807.50px;font-size:10.870px;line-height:10.870px;color:#000;">05:00</div>
<div class="t" style="left:507.60px;top:807.50px;font-size:10.870px;line-height:10.870px;color:#000;">06:00</div>
<div class="t" style="left:547.60px;top:807.50px;font-size:10.870px;line-height:10.870px;color:#000;">07:00</div>
<div class="t" style="left:587.60px;top:807.50px;font-size:10.870px;line-height:10.870px;color:#000;">08:00</div>
<div class="t" style="left:627.60px;top:807.50px;font-size:10.870px;line-height:10.870px;color:#000;">09:00</div>
<div class="t" style="left:668.60px;top:807.50px;font-size:10.870px;line-height:10.870px;color:#000;">10:00</div>
<div class="t" style="left:709.00px;top:807.50px;font-size:10.870px;line-height:10.870px;color:#000;">11:00</div>
<div class="t" style="left:748.60px;top:807.50px;font-size:10.870px;line-height:10.870px;color:#000;">12:00</div>
<div class="t" style="left:788.60px;top:807.50px;font-size:10.870px;line-height:10.870px;color:#000;">13:00</div>
<div class="t" style="left:829.60px;top:807.50px;font-size:10.870px;line-height:10.870px;color:#000;">14:00</div>
<div class="t" style="left:869.60px;top:807.50px;font-size:10.870px;line-height:10.870px;color:#000;">15:00</div>
<div class="t" style="left:909.60px;top:807.50px;font-size:10.870px;line-height:10.870px;color:#000;">16:00</div>
<div class="t" style="left:949.60px;top:807.50px;font-size:10.870px;line-height:10.870px;color:#000;">17:00</div>
<div class="t" style="left:990.60px;top:807.50px;font-size:10.870px;line-height:10.870px;color:#000;">18:00</div>
<div class="t" style="left:1030.60px;top:807.50px;font-size:10.870px;line-height:10.870px;color:#000;">19:00</div>
<div class="t" style="left:1070.60px;top:807.50px;font-size:10.870px;line-height:10.870px;color:#000;">20:00</div>
<div class="t" style="left:1110.60px;top:807.50px;font-size:10.870px;line-height:10.870px;color:#000;">21:00</div>
<div class="t" style="left:1151.60px;top:807.50px;font-size:10.870px;line-height:10.870px;color:#000;">22:00</div>
<div class="t" style="left:1190.60px;top:807.50px;font-size:10.870px;line-height:10.870px;color:#000;">23:00</div>
<div class="t" style="left:1278.00px;top:684.41px;font-size:10.500px;line-height:10.500px;color:#000;">Geschlossen</div>
<div class="t" style="left:1278.00px;top:700.41px;font-size:10.500px;line-height:10.500px;color:#000;">Offen</div>
<div class="a" style="left:1px;top:840px;width:1364px;height:24px;background:#f1f0ef;"></div>
<div class="a" style="left:1px;top:839px;width:1364px;height:1px;background:#d6e9fb;"></div>
<div class="t" style="left:3.50px;top:847.91px;font-size:10.740px;line-height:10.740px;color:#000;">© Aagon GmbH 2002 - 2025, all rights reserved</div>
<div class="a" style="left:0px;top:33px;width:1px;height:832px;background:#2b579a;"></div>
<div class="a" style="left:1365px;top:33px;width:1px;height:832px;background:#2b579a;"></div>
<div class="a" style="left:0px;top:864px;width:1366px;height:1px;background:#2b579a;"></div>
</body></html>
